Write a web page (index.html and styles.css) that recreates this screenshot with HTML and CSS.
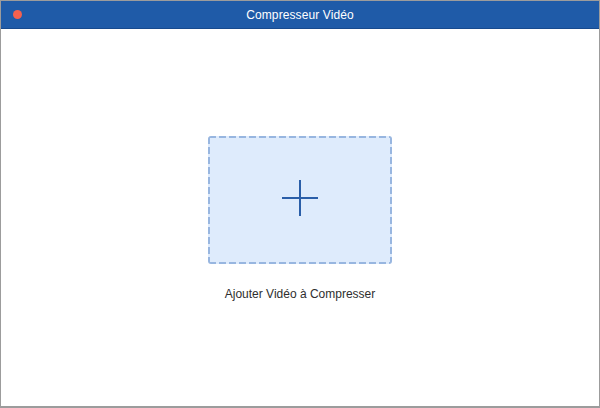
FILE: index.html
```html
<!DOCTYPE html>
<html lang="fr">
<head>
  <meta charset="UTF-8" />
  <title>Compresseur Vidéo</title>
  <link rel="stylesheet" href="styles.css">
</head>
<body>
  <div class="window">
    <div class="titlebar">
      <span class="close-dot"></span>
      <span class="title">Compresseur Vidéo</span>
    </div>
    <div class="content">
      <div class="drop-zone">
        <svg class="plus" width="38" height="38" viewBox="0 0 38 38">
          <path d="M19 1 V37 M1 19 H37" stroke="#2a5ea8" stroke-width="2" fill="none"/>
        </svg>
      </div>
      <div class="drop-label">Ajouter Vidéo à Compresser</div>
    </div>
  </div>
</body>
</html>
```
FILE: styles.css
```css
body {
  margin: 0;
  font-family: 'Liberation Sans', Arial, sans-serif;
  background: #fff;
}
.window {
  width: 600px;
  height: 408px;
  box-sizing: border-box;
  border: 1px solid #9c9c9c;
  border-bottom-width: 2px;
  display: flex;
  flex-direction: column;
}
.titlebar {
  height: 27px;
  background: #1f5ba8;
  border-bottom: 1px solid #174a8e;
  display: flex;
  align-items: center;
  justify-content: center;
  position: relative;
  color: #fff;
  font-size: 12px;
}
.close-dot {
  position: absolute;
  left: 12px;
  top: 9px;
  width: 9px;
  height: 9px;
  border-radius: 50%;
  background: #f4614f;
}
.title {
  letter-spacing: 0.1px;
}
.content {
  flex: 1;
  display: flex;
  flex-direction: column;
  align-items: center;
  padding-top: 107px;
}
/* dashes drawn with gradients: 7px on, 3px off */
.drop-zone {
  width: 184px;
  height: 128px;
  box-sizing: border-box;
  padding-bottom: 5px;
  border-radius: 3px;
  background-color: #deebfc;
  background-image:
    repeating-linear-gradient(90deg, #98b6e0 0 7px, transparent 7px 10px),
    repeating-linear-gradient(90deg, #98b6e0 0 7px, transparent 7px 10px),
    repeating-linear-gradient(180deg, #98b6e0 0 7px, transparent 7px 10px),
    repeating-linear-gradient(180deg, #98b6e0 0 7px, transparent 7px 10px);
  background-size: 100% 2px, 100% 2px, 2px 100%, 2px 100%;
  background-position: 1px 0, 1px 100%, 0 1px, 100% 1px;
  background-repeat: no-repeat;
  display: flex;
  align-items: center;
  justify-content: center;
}
.drop-label {
  margin-top: 22px;
  font-size: 12px;
  line-height: 16px;
  color: #2e2e2e;
}
```
